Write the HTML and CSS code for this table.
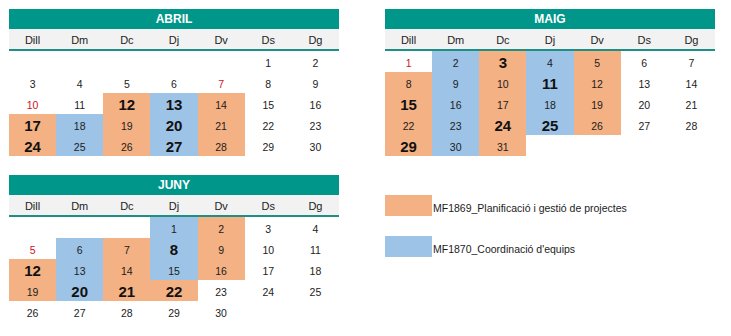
FILE: index.html
```html
<!DOCTYPE html>
<html>
<head>
<meta charset="utf-8">
<link rel="stylesheet" href="styles.css">
</head>
<body>
<div class="page">
  <div class="cal">
    <div class="title">ABRIL</div>
    <div class="dow"><span>Dill</span><span>Dm</span><span>Dc</span><span>Dj</span><span>Dv</span><span>Ds</span><span>Dg</span></div>
    <div class="days">
      <span></span><span></span><span></span><span></span><span></span><span>1</span><span>2</span>
      <span>3</span><span>4</span><span>5</span><span>6</span><span class="red">7</span><span>8</span><span>9</span>
      <span class="red">10</span><span>11</span><span class="o b">12</span><span class="bl b">13</span><span class="o">14</span><span>15</span><span>16</span>
      <span class="o b">17</span><span class="bl">18</span><span class="o">19</span><span class="bl b">20</span><span class="o">21</span><span>22</span><span>23</span>
      <span class="o b">24</span><span class="bl">25</span><span class="o">26</span><span class="bl b">27</span><span class="o">28</span><span>29</span><span>30</span>
    </div>
  </div>
  <div class="cal">
    <div class="title">MAIG</div>
    <div class="dow"><span>Dill</span><span>Dm</span><span>Dc</span><span>Dj</span><span>Dv</span><span>Ds</span><span>Dg</span></div>
    <div class="days">
      <span class="red">1</span><span class="bl">2</span><span class="o b">3</span><span class="bl">4</span><span class="o">5</span><span>6</span><span>7</span>
      <span class="o">8</span><span class="bl">9</span><span class="o">10</span><span class="bl b">11</span><span class="o">12</span><span>13</span><span>14</span>
      <span class="o b">15</span><span class="bl">16</span><span class="o">17</span><span class="bl">18</span><span class="o">19</span><span>20</span><span>21</span>
      <span class="o">22</span><span class="bl">23</span><span class="o b">24</span><span class="bl b">25</span><span class="o">26</span><span>27</span><span>28</span>
      <span class="o b">29</span><span class="bl">30</span><span class="o">31</span><span></span><span></span><span></span><span></span>
    </div>
  </div>
  <div class="cal">
    <div class="title">JUNY</div>
    <div class="dow"><span>Dill</span><span>Dm</span><span>Dc</span><span>Dj</span><span>Dv</span><span>Ds</span><span>Dg</span></div>
    <div class="days">
      <span></span><span></span><span></span><span class="bl">1</span><span class="o">2</span><span>3</span><span>4</span>
      <span class="red">5</span><span class="bl">6</span><span class="o">7</span><span class="bl b">8</span><span class="o">9</span><span>10</span><span>11</span>
      <span class="o b">12</span><span class="bl">13</span><span class="o">14</span><span class="bl">15</span><span class="o">16</span><span>17</span><span>18</span>
      <span class="o">19</span><span class="bl b">20</span><span class="o b">21</span><span class="o b">22</span><span>23</span><span>24</span><span>25</span>
      <span>26</span><span>27</span><span>28</span><span>29</span><span>30</span><span></span><span></span>
    </div>
  </div>
  <div class="legend">
    <div class="item"><span class="swatch o"></span><span class="label">MF1869_Planificació i gestió de projectes</span></div>
    <div class="item"><span class="swatch bl"></span><span class="label">MF1870_Coordinació d'equips</span></div>
  </div>
</div>
</body>
</html>
```
FILE: styles.css
```css
html, body {
  margin: 0;
  padding: 0;
  background: #ffffff;
}
body {
  font-family: "Liberation Sans", Arial, sans-serif;
  color: #1c1c1c;
}
.page {
  display: grid;
  grid-template-columns: 330px 330px;
  column-gap: 46px;
  row-gap: 19px;
  padding: 9px;
  align-items: start;
}
.cal {
  width: 330px;
}
.title {
  height: 20px;
  background: #00968a;
  color: #ffffff;
  font-weight: bold;
  font-size: 12px;
  line-height: 21px;
  text-align: center;
}
.dow {
  display: grid;
  grid-template-columns: repeat(7, 1fr);
  height: 20px;
  background: #f2f2f2;
  border-bottom: 2px solid #1f8f86;
  font-size: 11px;
  line-height: 23px;
  color: #222;
}
.dow span {
  text-align: center;
}
.days {
  display: grid;
  grid-template-columns: repeat(7, 1fr);
  grid-auto-rows: 21px;
}
.days span {
  display: flex;
  align-items: center;
  justify-content: center;
  font-size: 10.5px;
  padding-top: 2px;
  box-sizing: border-box;
  color: #1c1c1c;
}
.days span.b {
  font-weight: bold;
  font-size: 15px;
  color: #111;
  padding-top: 1px;
}
.days span.red {
  color: #d0101c;
}
.o {
  background: #f4b183;
}
.bl {
  background: #9dc3e6;
}
.legend {
  display: flex;
  flex-direction: column;
  gap: 20px;
  margin-top: 20px;
}
.item {
  display: flex;
  align-items: flex-end;
  height: 21px;
}
.swatch {
  width: 47px;
  height: 21px;
  flex: none;
}
.label {
  font-size: 10.5px;
  color: #1c1c1c;
  padding-left: 1px;
  padding-bottom: 2px;
}
```
